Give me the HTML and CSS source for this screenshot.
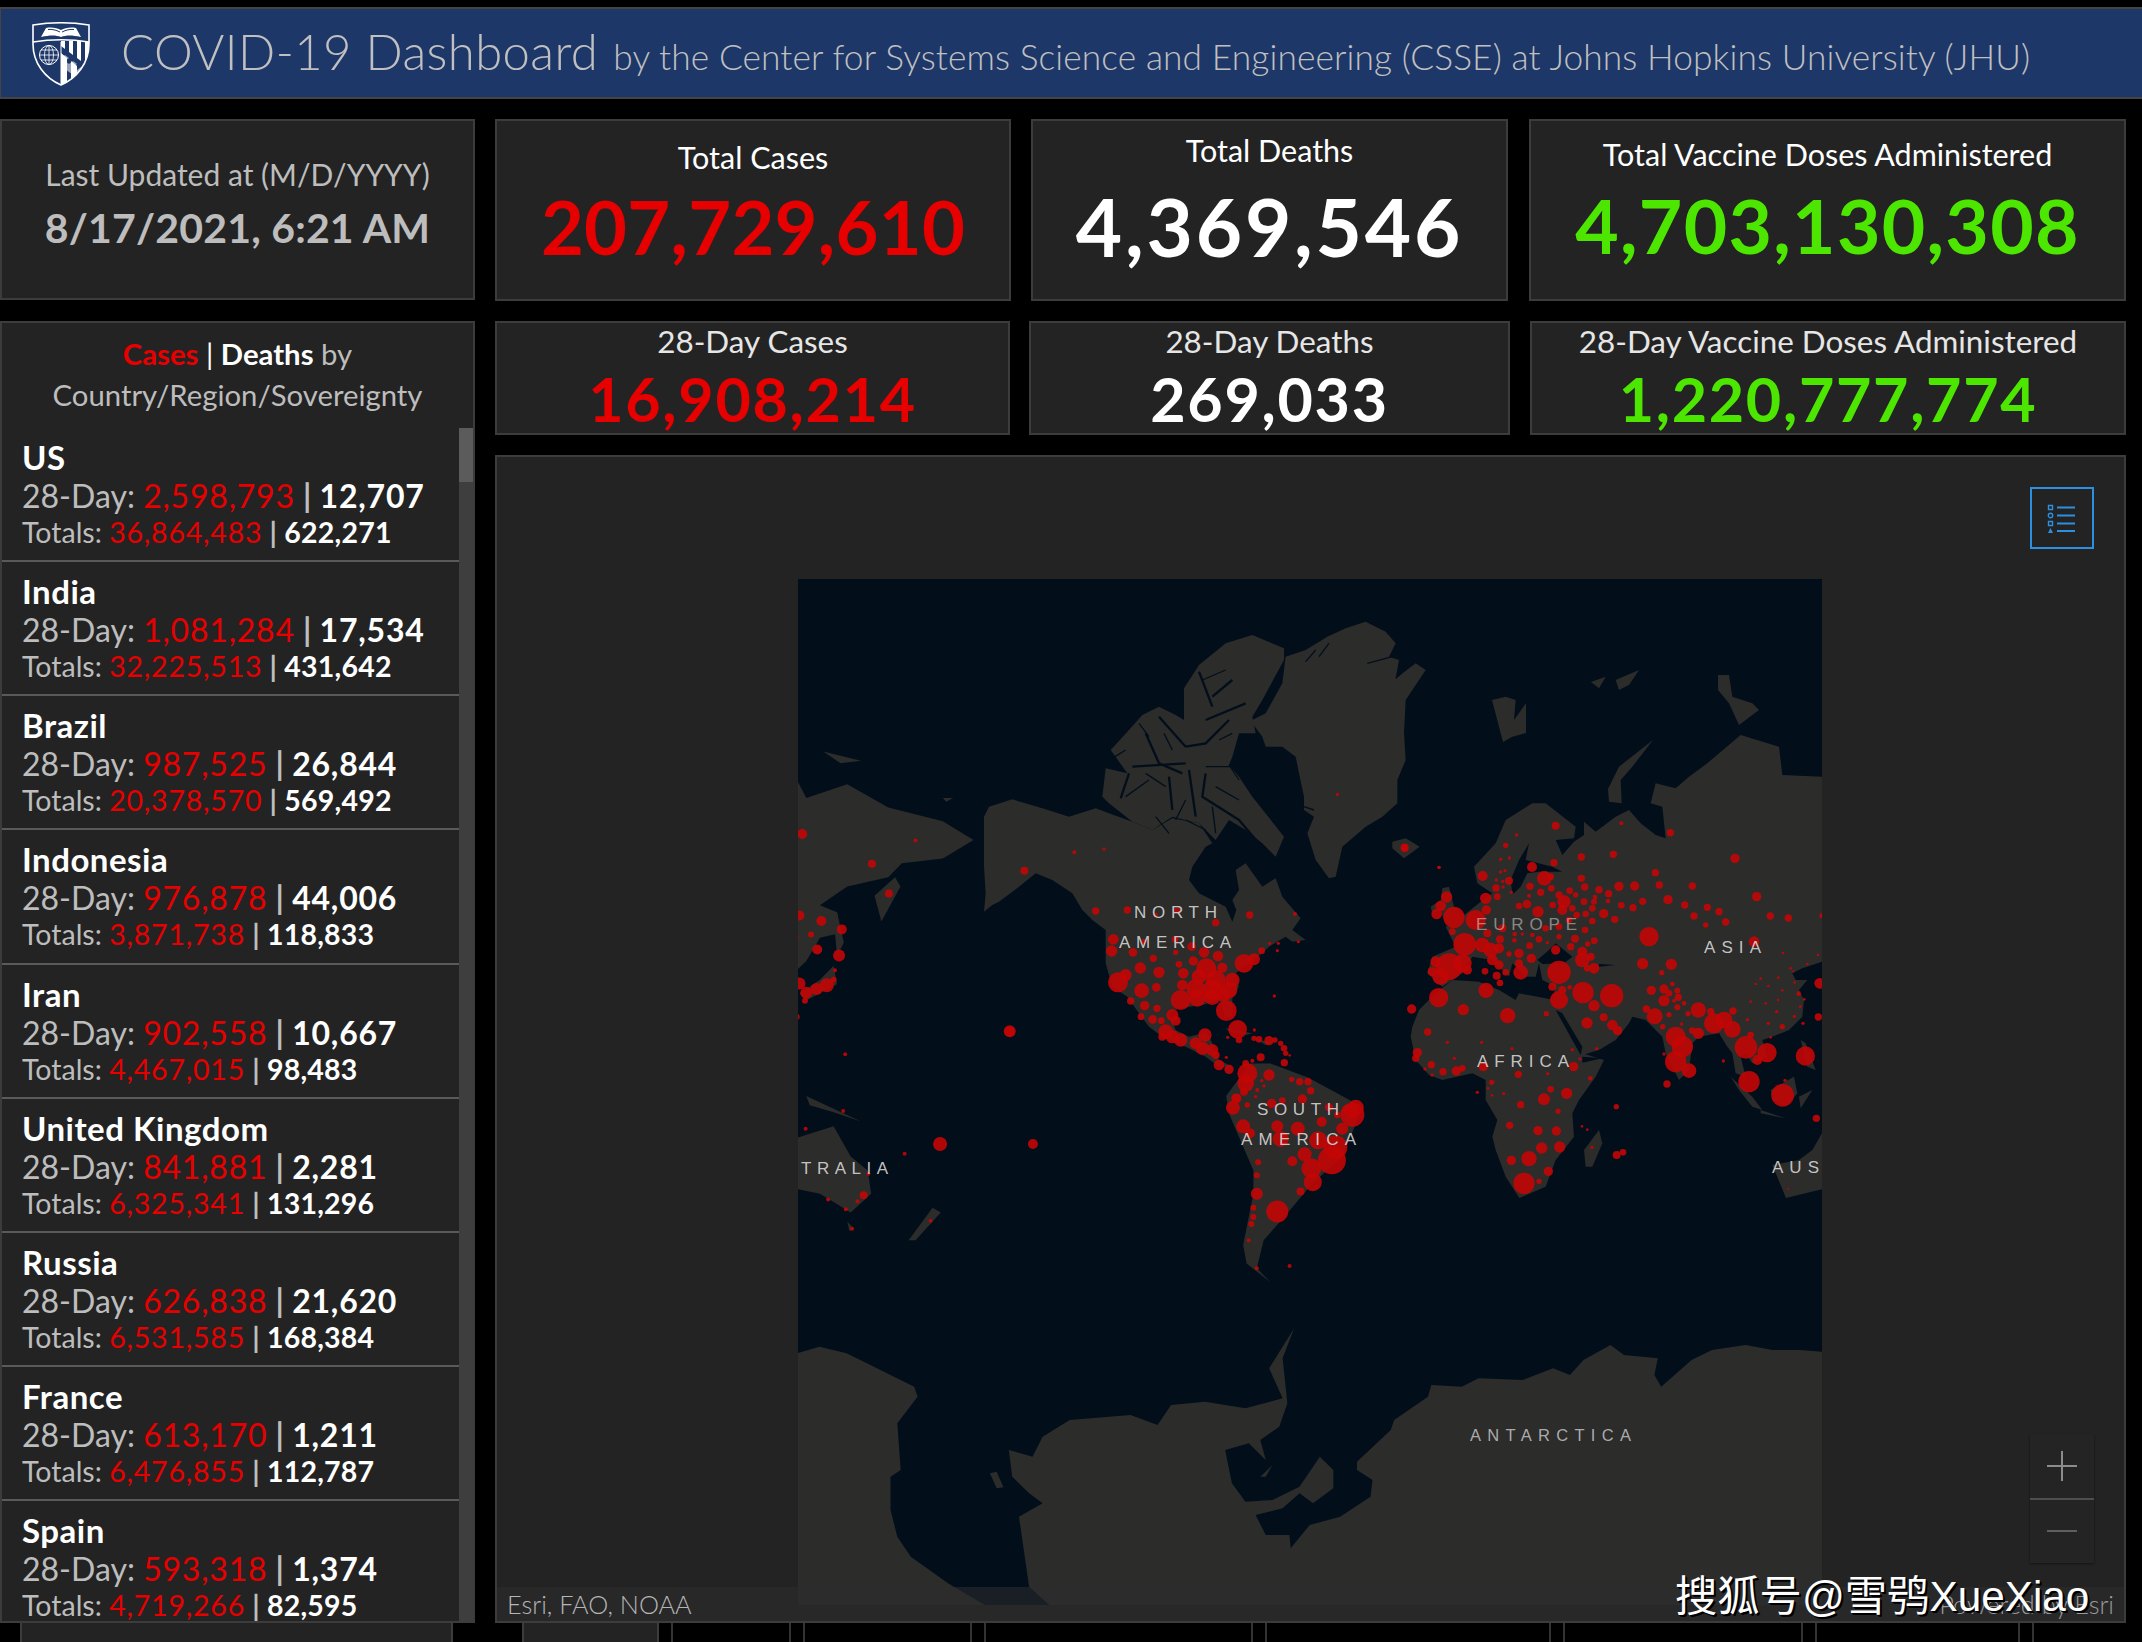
FILE: index.html
```html
<!DOCTYPE html>
<html lang="en">
<head>
<meta charset="utf-8">
<title>COVID-19 Dashboard</title>
<link rel="stylesheet" href="styles.css">
</head>
<body>
<header class="header">
  <svg class="logo" viewBox="0 0 58 64" aria-hidden="true">
    <defs><clipPath id="shield"><path d="M1 20C20 17 38 17 57 20V22C57 41 45 56 29 63C13 56 1 41 1 22Z"/></clipPath></defs>
    <path d="M1 3C20 0 38 0 57 3V22C57 41 45 56 29 63C13 56 1 41 1 22Z" fill="none" stroke="#fff" stroke-width="1.6"/>
    <path d="M1 20C20 17 38 17 57 20" fill="none" stroke="#fff" stroke-width="1.6"/>
    <path d="M9 15L14 6C20 5 25 6 29 8C33 6 38 5 44 6L49 15C40 13 34 13 29 15C24 13 18 13 9 15Z" fill="#fff"/>
    <path d="M16 7.500C20 7 24 8 28 10M42 7.500C38 7 34 8 30 10" stroke="#1e3769" stroke-width="1" fill="none"/>
    <circle cx="17" cy="33" r="9.500" fill="none" stroke="#fff" stroke-width="1"/>
    <ellipse cx="17" cy="33" rx="4.500" ry="9.500" fill="none" stroke="#fff" stroke-width=".8"/>
    <path d="M7.500 33H26.500M9 28H25M9 38H25M17 23.500V42.500" stroke="#fff" stroke-width=".8"/>
    <g clip-path="url(#shield)">
      <path d="M29 19H33V27L29 24ZM37 19H41V33L37 30ZM45 19H49V39L45 36ZM53 19H57V45L53 42Z" fill="#fff"/>
      <path d="M29 31L35 36V62H29ZM39 39L45 44V62H39ZM49 47L57 53V62H49Z" fill="#fff"/>
      <path d="M29 36L33 33 37 36 33 39 37 42 41 39 45 42 41 45 45 48 49 45 53 48 49 51 53 54 57 51V62H53L29 44Z" fill="#fff" opacity=".55"/>
    </g>
    <path d="M29 20V62" stroke="#fff" stroke-width="1"/>
  </svg>
  <h1 class="title">COVID-19 Dashboard</h1>
  <span class="subtitle">by the Center for Systems Science and Engineering (CSSE) at Johns Hopkins University (JHU)</span>
</header>

<main class="dash">
  <div class="side">
    <section class="card updated">
      <div class="updated-label">Last Updated at (M/D/YYYY)</div>
      <div class="updated-value">8/17/2021, 6:21 AM</div>
    </section>
    <section class="card list-panel">
      <div class="list-title">
        <div><span class="red med">Cases</span> <span class="white">|</span> <span class="white med">Deaths</span> by</div>
        <div>Country/Region/Sovereignty</div>
      </div>
      <div class="list-body">
        <div class="rows">
          <article class="row"><h3>US</h3><p class="l28">28-Day: <b class="red">2,598,793</b> <i>|</i> <b class="white">12,707</b></p><p class="ltot">Totals: <b class="red">36,864,483</b> <i>|</i> <b class="white">622,271</b></p></article>
          <article class="row"><h3>India</h3><p class="l28">28-Day: <b class="red">1,081,284</b> <i>|</i> <b class="white">17,534</b></p><p class="ltot">Totals: <b class="red">32,225,513</b> <i>|</i> <b class="white">431,642</b></p></article>
          <article class="row"><h3>Brazil</h3><p class="l28">28-Day: <b class="red">987,525</b> <i>|</i> <b class="white">26,844</b></p><p class="ltot">Totals: <b class="red">20,378,570</b> <i>|</i> <b class="white">569,492</b></p></article>
          <article class="row"><h3>Indonesia</h3><p class="l28">28-Day: <b class="red">976,878</b> <i>|</i> <b class="white">44,006</b></p><p class="ltot">Totals: <b class="red">3,871,738</b> <i>|</i> <b class="white">118,833</b></p></article>
          <article class="row"><h3>Iran</h3><p class="l28">28-Day: <b class="red">902,558</b> <i>|</i> <b class="white">10,667</b></p><p class="ltot">Totals: <b class="red">4,467,015</b> <i>|</i> <b class="white">98,483</b></p></article>
          <article class="row"><h3>United Kingdom</h3><p class="l28">28-Day: <b class="red">841,881</b> <i>|</i> <b class="white">2,281</b></p><p class="ltot">Totals: <b class="red">6,325,341</b> <i>|</i> <b class="white">131,296</b></p></article>
          <article class="row"><h3>Russia</h3><p class="l28">28-Day: <b class="red">626,838</b> <i>|</i> <b class="white">21,620</b></p><p class="ltot">Totals: <b class="red">6,531,585</b> <i>|</i> <b class="white">168,384</b></p></article>
          <article class="row"><h3>France</h3><p class="l28">28-Day: <b class="red">613,170</b> <i>|</i> <b class="white">1,211</b></p><p class="ltot">Totals: <b class="red">6,476,855</b> <i>|</i> <b class="white">112,787</b></p></article>
          <article class="row"><h3>Spain</h3><p class="l28">28-Day: <b class="red">593,318</b> <i>|</i> <b class="white">1,374</b></p><p class="ltot">Totals: <b class="red">4,719,266</b> <i>|</i> <b class="white">82,595</b></p></article>
        </div>
        <div class="scrollbar"><div class="thumb"></div></div>
      </div>
    </section>
  </div>

  <div class="content">
    <div class="stats stats-total">
      <section class="card stat s-cases"><div class="stat-label white">Total Cases</div><div class="stat-num red">207,729,610</div></section>
      <section class="card stat s-deaths"><div class="stat-label white">Total Deaths</div><div class="stat-num white">4,369,546</div></section>
      <section class="card stat s-vax"><div class="stat-label white">Total Vaccine Doses Administered</div><div class="stat-num green">4,703,130,308</div></section>
    </div>
    <div class="stats stats-28">
      <section class="card stat s-cases28"><div class="stat-label soft">28-Day Cases</div><div class="stat-num red">16,908,214</div></section>
      <section class="card stat s-deaths28"><div class="stat-label soft">28-Day Deaths</div><div class="stat-num white">269,033</div></section>
      <section class="card stat s-vax28"><div class="stat-label soft">28-Day Vaccine Doses Administered</div><div class="stat-num green">1,220,777,774</div></section>
    </div>
    <section class="card map-panel">
      <svg class="map" viewBox="799 579 1024 1026" aria-label="World map">
        <rect class="sea" x="799" y="579" width="1024" height="1026"/>
        <g class="land" transform="translate(1000 600) scale(.33333)">
          <path d="M-45 650L-30 620 40 598 130 625 210 650 290 625 330 640 400 665 460 690 520 655 600 670 640 730 620 740 580 800 570 840 600 880 680 920 700 965 712 930 700 900 720 870 710 810 740 790 790 860 830 835 850 890 905 955 880 990 920 1020 880 1025 860 1010 810 1040 790 1060 750 1090 710 1120 720 1160 700 1190 700 1250 680 1250 660 1200 610 1215 540 1225 510 1240 530 1290 570 1310 610 1300 620 1290 640 1330 660 1380 700 1400 660 1400 620 1370 560 1340 490 1310 450 1280 420 1240 385 1190 340 1160 320 1090 320 990 280 960 250 930 220 880 160 840 110 820 60 860 0 905-20 915-45 935-40 880-45 800Z"/>
          <path d="M310 590L320 505 385 520 335 450 385 395 430 345 480 320 530 345 555 360 555 265 600 195 680 130 760 105 855 145 855 180 790 300 760 350 770 400 720 400 700 470 690 495 720 530 760 590 855 710 830 770 790 730 740 690 690 660 650 720 600 670 520 650 460 690 400 665 330 610Z"/>
          <path class="channels" d="M600 215L640 320M700 240L640 290M740 310L620 360M480 350L560 440M560 440L620 430 690 360M440 400L480 490 550 520M390 520L365 595M510 530L520 630M570 510L590 650M620 520L610 590 720 660 830 790M400 500L560 490"/>
          <path class="channels thin" d="M380 450L340 475M700 500L620 500M470 650L510 700M640 620L650 700M440 520L500 560M560 600L530 660M720 540L690 495M610 240L680 210M420 370L450 410M495 400L520 450M660 420L700 400M380 590L450 540M650 560L720 600M560 660L620 690"/>
          <path d="M760 360L800 340 850 250 860 170 920 150 985 110 1040 85 1100 65 1160 95 1190 130 1170 170 1200 180 1190 235 1250 190 1280 210 1220 300 1215 400 1220 480 1195 540 1195 610 1150 650 1100 680 1030 740 1010 830 990 835 950 780 925 700 945 650 915 630 915 590 900 520 890 470 850 440 800 440 790 410 760 370Z"/>
          <path class="channels thin" d="M920 185L950 150M960 170L990 130M1105 190L1180 170M1190 235L1230 200M915 620L945 630"/>
          <path d="M1180 725L1220 715 1262 740 1215 775 1180 745Z"/>
          <path d="M680 1285L760 1300 740 1305 690 1295ZM775 1320L820 1325 800 1335Z"/>
        </g>
        <g class="land" transform="translate(1400 760) scale(.33333)">
          <path d="M225 320L290 250 320 180 400 130 440 130 530 200 525 235 470 240 490 285 525 245 555 225 555 185 590 215 650 170 690 150 725 190 770 225 800 235 790 140 755 130 770 70 830 85 870 50 925 10 1025-75 1140-40 1150 45 1269 50 1269 605 1210 625 1180 640 1190 660 1225 660 1200 690 1215 720 1210 770 1170 810 1120 830 1090 840 1105 890 1060 910 1040 880 1025 890 1040 950 1010 940 1000 880 985 860 960 820 900 830 880 850 870 930 840 960 800 880 790 830 740 780 700 770 690 790 650 840 600 870 550 885 520 830 470 750 460 720 470 680 430 660 420 610 410 650 380 650 340 610 330 650 280 600 220 590 190 640 130 680 85 640 100 590 170 560 140 500 165 490 245 425 280 400 235 370Z"/>
          <path d="M130 385L150 380 165 440 200 470 160 500 135 480 125 450 100 460 95 440 125 420Z"/>
          <path d="M40 800L60 750 110 700 160 660 240 665 300 690 350 720 360 700 440 715 465 720 480 760 520 840 550 880 615 900 590 950 540 1020 520 1060 525 1130 470 1200 440 1280 361 1314 320 1250 290 1170 280 1130 295 1080 260 1020 260 960 220 940 130 960 90 945 50 900 35 830Z"/>
          <path d="M555 1170L600 1110 610 1150 580 1220 560 1220Z"/>
          <path d="M995 950L1060 1010 1090 1050 1060 1040 1020 990ZM1085 1050L1160 1075 1085 1060Z"/>
          <path d="M1115 990L1185 950 1195 1000 1160 1040 1120 1020ZM1200 1010L1240 990 1205 1045ZM1205 840L1220 850 1250 930 1225 920Z"/>
          <path d="M1120 1215L1200 1200 1240 1170 1269 1120 1269 1288 1161 1314Z"/>
          <path d="M627 87L660 20 762-60 700 20 665 60 668 130 630 125Z"/>
          <path d="M279-180L320-190 350-180 345-120 381-170 381-81 340-70 312-54ZM576-234L620-250 600-215ZM650-240L720-270 690-225 660-210ZM957-255L990-255 1000-190 1060-170 1080-150 1020-105 990-170 957-210Z"/>
          <path class="sea-patch" d="M340 400L335 360 360 300 390 250 380 300 460 320 490 335 420 335 385 340 365 380 345 400Z"/>
          <path class="sea-patch" d="M415 600L450 570 470 550 520 590 495 610 430 612Z"/>
          <path class="sea-patch" d="M600 612L650 615 600 620Z"/>
          <path class="sea-patch" d="M470 750L490 760 550 860 545 885 520 840ZM550 890L610 895 550 908Z"/>
        </g>
        <g class="land" transform="translate(780 570) scale(.6826 .4655)">
          <path d="M26 450L40 490 100 460 160 510 240 540 285 580 240 620 180 630 160 660 100 680 60 720 85 735 90 780 60 790 40 840 26 860Z"/>
          <path d="M140 700L170 660 178 680 150 755Z"/>
          <path d="M65 390L120 410 90 415Z"/>
          <path d="M240 490L255 490 245 498Z"/>
          <path d="M85 735L95 800 85 830 82 780Z"/>
          <path d="M80 850L85 890 40 925 30 910 60 880Z"/>
          <path d="M26 1220L80 1195 105 1260 130 1290 135 1340 105 1380 60 1340 26 1330Z"/>
          <path d="M100 1400L110 1415 103 1420ZM225 1370L237 1380 200 1440 190 1440ZM40 1130L120 1185 80 1165 45 1150Z"/>
          <path d="M655 1130L690 1060 720 1060 775 1090 850 1150 845 1190 825 1260 780 1320 740 1390 710 1440 700 1500 720 1530 685 1490 680 1450 695 1340 695 1290 660 1170Z"/>
        </g>
        <g class="land" transform="translate(780 1280) scale(.676 .33333)">
          <path d="M27 220L60 200 100 220 130 250 200 320 205 350 175 430 180 570 165 590 165 690 175 770 195 830 250 910 300 970 305 975 27 975Z"/>
          <path d="M340 510L375 530 390 470 430 420 520 405 560 435 580 375 630 365 690 385 745 355 725 265 762 145 745 235 752 370 740 440 712 480 720 540 695 490 660 510 670 610 690 665 730 660 770 620 800 530 820 570 820 625 790 670 770 640 745 685 705 705 720 765 755 765 757 805 785 735 830 710 875 650 878 600 855 570 855 545 905 450 910 420 960 350 965 315 1010 320 1035 295 1100 300 1145 265 1170 285 1190 240 1230 195 1250 225 1300 235 1295 285 1305 320 1350 240 1380 210 1430 195 1470 210 1510 210 1543 215 1543 975 400 975 370 920 355 710 390 670 370 640 345 590Z"/>
          <path d="M312 580L322 575 332 622 322 625ZM712 590L730 555 720 590Z"/>
        </g>
        <g id="dots" class="dots"></g>
        <g class="labels">
          <text x="1135" y="918" textLength="83">NORTH</text>
          <text x="1120" y="948" textLength="112">AMERICA</text>
          <text x="1258" y="1115" textLength="82">SOUTH</text>
          <text x="1242" y="1145" textLength="115">AMERICA</text>
          <text class="dim" x="1477" y="930" textLength="101">EUROPE</text>
          <text x="1705" y="953" textLength="57">ASIA</text>
          <text x="1478" y="1067" textLength="92">AFRICA</text>
          <text x="802" y="1174" textLength="87">TRALIA</text>
          <text x="1773" y="1173" textLength="47">AUS</text>
          <text class="small" x="1471" y="1441" textLength="161">ANTARCTICA</text>
        </g>
      </svg>
      <button class="legend-btn" aria-label="Legend">
        <svg viewBox="0 0 30 30" class="legend-icon"><path d="M10 4.500H28M10 12.500H28M10 20.500H28M10 28H28" stroke="#2d8fe0" stroke-width="2" fill="none"/><path d="M1.500 2.500H5.500V6.500H1.500ZM1.500 18.500H5.500V22.500H1.500Z" stroke="#2d8fe0" stroke-width="1.400" fill="none"/><circle cx="3.500" cy="12.500" r="2.200" stroke="#2d8fe0" stroke-width="1.400" fill="none"/><path d="M3.500 25L6 30H1Z" fill="#2d8fe0"/></svg>
      </button>
      <div class="zoom">
        <div class="zoom-btn"><svg viewBox="0 0 30 30" class="zoom-icon"><path d="M0 15H30M15 0V30" stroke="#8c8c8c" stroke-width="2"/></svg></div>
        <div class="zoom-btn"><svg viewBox="0 0 30 30" class="zoom-icon"><path d="M0 15H30" stroke="#5e5e5e" stroke-width="2"/></svg></div>
      </div>
      <div class="attribution"><span>Esri, FAO, NOAA</span><span class="powered">Powered by Esri</span></div>
      <div class="watermark">搜狐号@雪鸮XueXiao</div>
    </section>
  </div>
</main>

<nav class="tabs" aria-hidden="true">
  <div class="tab fill t1"></div>
  <div class="tab fill t2"></div>
  <div class="tab t3"></div>
  <div class="tab t4"></div>
  <div class="tab t5"></div>
  <div class="tab t6"></div>
  <div class="tab t7"></div>
  <div class="tab t8"></div>
  <div class="tab t9"></div>
</nav>
<script src="map.js"></script>
</body>
</html>
```

FILE: styles.css
```css
* { box-sizing: border-box; }
html, body { margin: 0; padding: 0; }
body {
  width: 2142px;
  height: 1642px;
  overflow: hidden;
  background: #000;
  font-family: Lato, "Noto Sans CJK SC", sans-serif;
  color: #bdbdbd;
  padding-top: 7px;
}
h1, h3, p { margin: 0; font-weight: inherit; font-size: inherit; }

.red { color: #e60000; }
.white { color: #fff; }
.green { color: #4ce600; }
.soft { color: #e6e6e6; }
.med { font-weight: 700; }

.header {
  height: 92px;
  background: #1e3769;
  border: 2px solid #444;
  border-left-width: 1px;
  border-right: 0;
  display: flex;
  align-items: baseline;
  padding-left: 31px;
  color: #c0c0c0;
  position: relative;
}
.logo {
  width: 58px;
  height: 64px;
  align-self: flex-start;
  margin-top: 13px;
  margin-right: 31px;
  flex: none;
}
.title {
  font-size: 49px;
  font-weight: 300;
  line-height: 85px;
  margin-right: 15px;
  letter-spacing: .4px;
}
.subtitle { font-size: 35.300px; font-weight: 300; letter-spacing: .1px; }

.dash {
  display: flex;
  gap: 20px;
  margin-top: 20px;
  width: 2126px;
  height: 1504px;
}
.side { width: 475px; flex: none; display: flex; flex-direction: column; gap: 21px; }
.content { flex: 1; display: flex; flex-direction: column; gap: 20px; min-width: 0; }

.card { background: #232323; border: 2px solid #3c3c3c; }

.updated {
  height: 181px;
  text-align: center;
  padding-top: 33px;
}
.updated-label { font-size: 30px; line-height: 40px; }
.updated-value { font-size: 41px; line-height: 50px; margin-top: 9px; font-weight: 700; letter-spacing: .2px; }

.list-panel { flex: 1; min-height: 0; display: flex; flex-direction: column; }
.list-title {
  height: 105px;
  flex: none;
  padding-top: 10px;
  text-align: center;
  font-size: 29.300px;
  line-height: 41px;
}
.list-body { flex: 1; min-height: 0; display: flex; overflow: hidden; }
.rows { flex: 1; min-width: 0; }
.scrollbar { width: 14px; flex: none; background: #3e3e3e; }
.thumb { height: 54px; background: #5b5b5b; }

.row {
  height: 134.200px;
  padding: 10px 0 0 20px;
  border-bottom: 2px solid #5a5a5a;
  white-space: nowrap;
}
.row:first-child { height: 134px; padding-top: 10px; }
.row h3 { font-size: 33px; letter-spacing: .5px; font-weight: 700; color: #fff; line-height: 38px; }
.row b { font-weight: 400; }
.row b.white { font-weight: 700; }
.row i { font-style: normal; color: #bdbdbd; font-weight: 700; }
.l28 { font-size: 32px; line-height: 40px; }
.ltot { font-size: 28.500px; line-height: 32px; }
.row .l28 b { letter-spacing: .8px; }
.row .ltot b.red { letter-spacing: .8px; }
.row .ltot b.white { letter-spacing: .2px; font-size: 28.500px; }

.stats { display: flex; flex: none; }
.stats-total { height: 182px; gap: 20px; }
.stats-28 { height: 114px; gap: 19px; }
.stat { text-align: center; white-space: nowrap; }
.s-cases { width: 516px; padding-top: 15px; }
.s-deaths { width: 477px; padding-top: 8px; }
.s-vax { width: 597px; margin-left: 1px; padding-top: 12px; }
.s-cases28 { width: 515px; }
.s-deaths28 { width: 481px; margin-right: 1px; }
.s-vax28 { width: 596px; }
.stat-label { font-size: 30.500px; line-height: 42px; }
.stat-num { line-height: 84px; font-weight: 700; }
.s-cases .stat-num { font-size: 74px; letter-spacing: .3px; margin-top: 7px; }
.s-deaths .stat-num { font-size: 80px; letter-spacing: 2.800px; margin-top: 13px; }
.s-vax .stat-num { font-size: 75px; letter-spacing: 1.300px; margin-top: 8px; }
.stats-28 .stat-label { font-size: 31.400px; line-height: 36px; }
.stats-28 .stat-num { font-size: 61px; letter-spacing: 1.700px; line-height: 62px; margin-top: 9px; }

.map-panel {
  flex: 1;
  min-height: 0;
  position: relative;
  padding: 122px 301px 0 301px;
  overflow: hidden;
}
.map { display: block; width: 1024px; height: 1026px; }
.sea { fill: #020f1b; }
.land path { fill: #2c2c2b; }
.land path.sea-patch { fill: #020f1b; }
.land path.channels { fill: none; stroke: #020f1b; stroke-width: 7; }
.land path.channels.thin { stroke-width: 4; }
.dots { fill: #c30505; fill-opacity: .9; }
.labels text {
  font-family: "Liberation Sans", Arial, sans-serif;
  font-size: 17px;
  fill: #d8d8d8;
  fill-opacity: .9;
}
.labels text.dim { fill-opacity: .55; }
.labels text.small { font-size: 16.500px; fill: #bdbdbd; }

.legend-btn {
  position: absolute;
  left: 1533px;
  top: 30px;
  width: 64px;
  height: 62px;
  background: transparent;
  border: 2px solid #2d8fe0;
  padding: 0;
  display: flex;
  align-items: center;
  justify-content: center;
}
.legend-icon { width: 30px; height: 30px; }

.zoom {
  position: absolute;
  left: 1533px;
  top: 977px;
  width: 64px;
  height: 129px;
  background: #242424;
  box-shadow: 0 1px 2px rgba(0,0,0,.45);
  display: flex;
  flex-direction: column;
}
.zoom-btn { flex: 1; display: flex; align-items: center; justify-content: center; }
.zoom-btn:first-child { border-bottom: 2px solid #4e4e4e; }
.zoom-icon { width: 30px; height: 30px; }

.attribution {
  position: absolute;
  left: 0;
  right: 0;
  bottom: 0;
  height: 34px;
  background: rgba(45,45,45,.55);
  display: flex;
  justify-content: space-between;
  align-items: center;
  padding: 0 10px;
  font-size: 25.300px;
  font-weight: 300;
  color: #b5b5b5;
  white-space: nowrap;
}
.powered { color: #9a9a9a; }
.watermark {
  position: absolute;
  left: 1178px;
  top: 1115px;
  font-family: "Liberation Sans", "Noto Sans CJK SC", sans-serif;
  font-size: 42.300px;
  line-height: 50px;
  color: #fff;
  white-space: nowrap;
  text-shadow: 2px 2px 0 #000, 1px 1px 0 #000;
}

.tabs {
  display: flex;
  gap: 12px;
  padding-left: 20px;
  height: 19px;
  margin-top: 0;
}
.tab { border-left: 2px solid #333; border-right: 2px solid #333; flex: none; }
.tab.fill { background: #232323; border-color: #3c3c3c; }
.t1 { width: 433px; margin-right: 57px; }
.t2 { width: 137px; }
.t3 { width: 120px; }
.t4 { width: 169px; }
.t5 { width: 269px; }
.t6 { width: 286px; }
.t7 { width: 240px; }
.t8 { width: 205px; }
.t9 { width: 100px; border-right: 0; }
```

FILE: map.js
```js
// Case bubbles: [x, y, r] lists. Each list has its own source frame, mapped to the SVG's page coordinates.
var americas=[1015,583,5,1217,743,12,1320,802,5,76,812,12,226,757,6,315,747,5,290,933,11,385,930,11,470,945,7,535,932,9,650,968,11,752,945,11,888,942,6,32,1295,14,343,1018,16,338,1053,17,402,1057,13,435,1025,8,528,1018,10,578,1040,13,530,1057,8,615,1057,16,657,1068,16,463,1075,11,583,1083,14,540,1093,10,424,1104,17,480,1117,17,553,1120,16,357,1147,30,380,1125,18,428,1172,22,472,1162,13,622,1105,30,600,1130,22,670,1103,15,735,1090,28,765,1078,18,788,1052,10,812,1030,5,838,1030,5,835,1052,5,898,1025,5,700,1140,22,650,1140,30,590,1165,28,550,1155,16,640,1170,30,690,1170,25,545,1200,30,595,1195,25,640,1190,25,675,1185,20,395,1203,11,437,1217,14,474,1225,11,682,1232,31,826,1188,5,520,1245,18,530,1262,15,426,1250,10,461,1258,13,487,1262,10,500,1295,22,520,1310,20,545,1320,20,490,1310,12,618,1305,20,590,1330,18,610,1345,20,640,1350,18,650,1365,12,716,1288,28,720,1320,10,686,1312,5,766,1290,5,765,1315,8,780,1318,10,810,1322,14,828,1320,8,845,1330,8,855,1345,10,860,1360,8,872,1366,4,856,1388,11,682,1372,5,785,1372,12,660,1395,16,690,1408,14,740,1390,10,760,1382,6,745,1420,30,740,1450,25,735,1475,12,810,1425,17,788,1442,5,795,1458,5,775,1470,6,878,1438,8,902,1445,11,927,1445,11,935,1472,11,712,1495,14,745,1515,8,770,1490,5,818,1510,14,850,1502,10,910,1497,14,990,1522,12,1045,1528,14,1060,1540,16,1015,1545,10];
var overview=[670,1135,5,665,1155,7,680,1195,7,690,1210,5,730,1195,6,760,1200,7,795,1185,5,825,1200,6,840,1170,12,845,1155,8,735,1222,8,790,1225,9,815,1240,12,770,1255,7,752,1270,5,810,1268,14,780,1285,10,782,1315,9,702,1272,3,700,1300,3,764,1335,4,700,1340,6,730,1378,11,695,1370,3,695,1390,3,692,1405,3,688,1440,2,700,1500,2,748,1495,2,338,991,6,97,1040,2,236,1233,7,372,1233,5,184,1254,2,34,567,5,200,581,2,136,631,4,161,695,4,30,742,5,62,754,5,92,772,5,56,815,5,88,828,6,47,783,3,26,790,2,30,888,6,40,908,6,55,900,6,70,892,7,80,880,3,82,860,2,38,925,3,26,960,3,124,1343,4,72,1352,2,115,1356,2,98,1373,2,107,1415,2,222,1398,2,131,1297,2,94,1162,2,39,1200,2];
var oldWorld=[17,263,12,120,322,5,470,197,12,667,190,6,814,218,11,353,225,5,320,256,8,305,298,5,331,294,5,547,291,11,643,283,11,1008,295,14,465,308,11,251,348,15,399,321,15,318,332,5,305,336,5,292,360,5,311,364,5,330,362,12,436,355,22,455,350,10,547,355,11,769,338,11,291,384,11,312,381,5,393,379,11,337,397,5,457,385,10,557,381,11,660,379,14,707,378,14,781,375,11,880,378,11,1073,410,14,143,411,17,295,410,10,260,415,17,390,407,6,425,397,11,512,392,10,600,389,11,629,401,11,588,411,7,627,423,7,807,419,14,480,405,11,530,405,8,495,425,20,555,425,10,585,425,9,125,438,16,113,462,16,165,472,32,230,480,30,262,450,14,360,438,10,384,432,13,417,455,17,461,435,10,520,445,10,580,445,10,667,436,10,702,443,11,731,424,11,857,435,11,925,442,11,960,455,11,1114,468,11,1168,474,11,1269,467,8,490,450,15,533,465,10,560,462,10,614,461,14,647,478,11,885,468,11,980,486,11,920,495,8,160,515,10,310,505,12,265,520,12,347,522,7,370,522,5,400,525,7,440,505,10,480,500,10,510,480,10,580,483,10,558,510,10,197,553,34,250,555,22,303,538,12,346,541,7,420,538,10,480,530,8,445,548,5,528,536,12,586,542,10,566,552,8,750,530,29,1065,545,16,392,557,10,275,570,22,300,565,15,470,570,14,515,560,11,330,582,8,360,580,14,550,575,15,575,590,12,280,600,16,397,595,14,110,605,16,150,620,40,190,610,28,125,650,25,100,635,14,205,630,14,550,600,22,585,625,16,565,625,10,360,610,12,300,615,14,365,637,22,480,637,35,731,611,17,817,613,17,258,634,10,320,637,10,293,647,12,303,669,10,788,638,8,460,680,12,490,690,12,512,682,7,261,691,23,552,698,32,638,707,35,119,713,29,480,720,27,757,691,14,795,687,14,820,672,7,835,692,9,810,700,10,838,712,11,795,722,17,825,722,6,855,730,7,1070,672,4,1085,656,4,1138,653,4,1108,678,4,1150,691,4,1055,725,4,1100,730,4,1137,720,4,1187,667,4,1199,701,7,1216,718,4,1204,740,4,1152,579,4,1257,585,4,1225,612,4,1175,625,4,1183,634,3,1262,670,16,38,747,14,193,749,17,326,767,23,442,761,8,585,737,17,742,747,11,835,742,9,898,750,23,767,769,24,867,761,8,810,764,8,1002,753,11,935,755,11,975,780,25,945,790,30,1000,808,25,1258,771,11,1133,755,5,1186,769,5,1045,779,5,1108,790,5,1150,800,8,1212,790,5,614,772,12,564,789,17,640,795,16,656,812,14,791,800,8,848,792,5,880,812,10,898,820,17,86,816,11,145,847,5,248,847,5,830,830,30,850,860,32,1041,862,34,1055,825,10,1115,832,4,1104,878,29,1075,900,15,1219,888,29,339,866,5,593,866,5,55,878,14,50,895,11,795,882,5,166,895,5,520,869,5,543,897,5,97,914,11,830,905,32,870,932,22,973,903,5,253,920,14,524,920,14,132,935,11,78,927,5,99,945,5,172,933,14,190,925,10,358,943,11,446,941,5,574,955,7,1158,961,5,804,972,11,1050,965,32,278,967,8,267,985,4,235,997,5,279,1006,4,314,1001,5,455,988,10,503,1000,17,1151,1006,34,435,1018,18,365,1034,11,652,1040,8,477,1054,8,1252,1075,11,332,1096,11,549,1099,4,565,1109,4,417,1112,14,472,1113,14,428,1164,17,482,1161,17,579,1162,5,653,1185,12,672,1177,10,337,1201,14,390,1196,23,448,1234,14,375,1270,32,420,1264,8,1168,1286,3];
var NS='http://www.w3.org/2000/svg',dots=document.getElementById('dots');
function add(list,ox,oy,sx,sy,rs){
  for(var i=0;i<list.length;i+=3){
    var c=document.createElementNS(NS,'circle');
    c.setAttribute('cx',ox+list[i]*sx);
    c.setAttribute('cy',oy+list[i+1]*sy);
    c.setAttribute('r',list[i+2]*rs);
    dots.appendChild(c);
  }
}
add(americas,1000,600,1/3,1/3,1/3);
add(overview,780,570,1/1.465,1/2.148,1);
add(oldWorld,1400,760,1/3,1/3,1/3);
```
